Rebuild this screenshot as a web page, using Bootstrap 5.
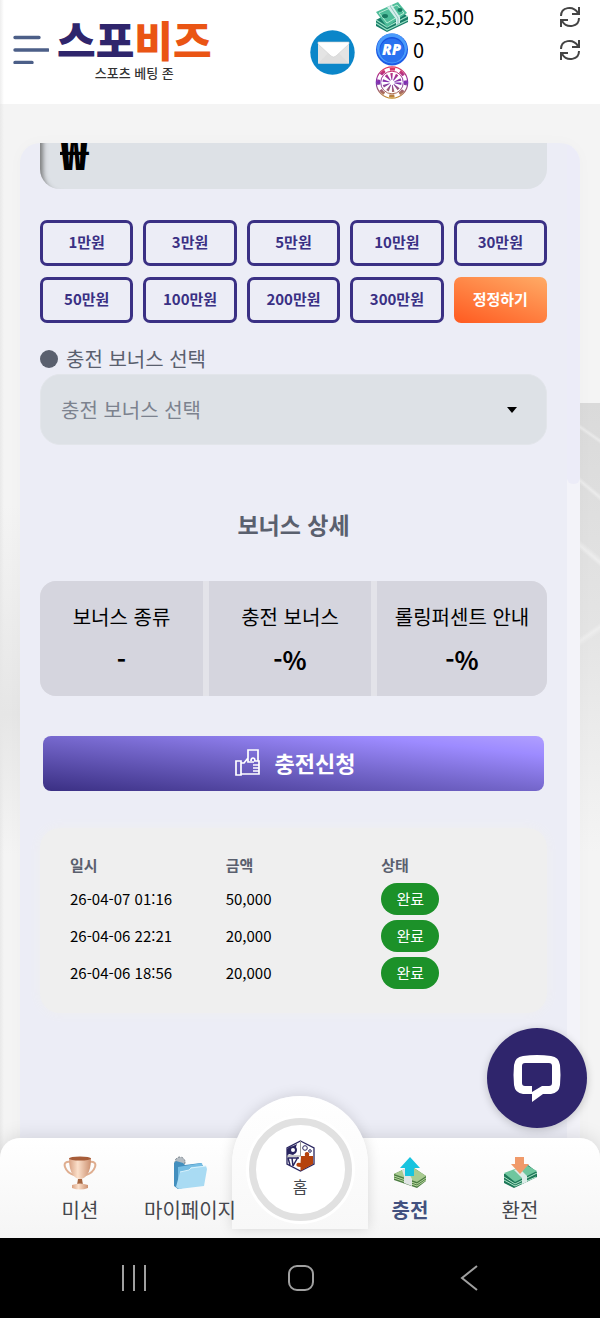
<!DOCTYPE html>
<html lang="ko">
<head>
<meta charset="utf-8">
<meta name="viewport" content="width=device-width, initial-scale=1">
<title>스포비즈 - 충전</title>
<link href="https://cdn.jsdelivr.net/npm/bootstrap@5.3.0/dist/css/bootstrap.min.css" rel="stylesheet">
<style>
:root { --navy: #2f256c; --violet: #3a3084; --ink: #5a606e; --panel: #ecedf6; --field: #dde1e6; }
body { font-family: "Noto Sans CJK KR", "Noto Sans", sans-serif; background: #f4f4f4; color: #000; font-size: 20px; line-height: 30px; }
button { font-family: inherit; }
.page { min-height: 100vh; }
.topbar { height: 104px; background: linear-gradient(90deg, #eee, #fff 4px); }
.burger { width: 37px; height: 32px; }
.brand { line-height: 42px; color: #333; padding-top: 18px; }
.brand-name { font-size: 42px; font-weight: 900; color: var(--navy); }
.brand-name b { font-weight: 900; color: #ea5514; }
.brand-sub { font-size: 13px; line-height: 20px; font-weight: 500; color: #333; margin-top: 3px; }
.stats { width: 206px; margin: 0 19px 0 20px; }
.stat-row { height: 33px; }
.stage { padding: 39px 20px 0; }
.scenery { background:
  linear-gradient(180deg, #f4f4f400, #e6e6e6 60%, #f4f4f400) left 400px / 20px 350px no-repeat,
  linear-gradient(35deg, #0000 44%, #fff6 50%, #0000 56%) right 310px / 20px 40px no-repeat,
  linear-gradient(220deg, #0000 44%, #fff6 50%, #0000 56%) right 360px / 20px 50px no-repeat,
  linear-gradient(220deg, #0000 42%, #fff6 50%, #0000 56%) right 420px / 20px 60px no-repeat,
  linear-gradient(325deg, #0000 42%, #fff5 50%, #0000 56%) right 500px / 20px 60px no-repeat,
  linear-gradient(180deg, #dadada, #e4e4e4 50%, #f4f4f400) right 299px / 20px 450px no-repeat,
  linear-gradient(90deg, #e9e9e9, #f4f4f4 4px); }
.panel { background: var(--panel); border-radius: 20px 20px 0 0; overflow: hidden; box-shadow: 0 0 16px #00000006; }
.panel-body { padding: 0 20px 124px; min-width: 0; }
.track { width: 13px; background: #f3f3f9; }
.thumb { height: 341px; background: #ececf8; border-radius: 0 0 6px 6px; }
.amount-clip { height: 46px; overflow: hidden; }
.amount { height: 80px; border: 0; border-radius: 20px; background: var(--field); padding: 2px 20px 0; font-size: 46px; font-weight: 900; color: #000; box-shadow: inset 5px 4px 5px -2px #555b; }
.amounts { display: grid; grid-template-columns: repeat(5, 1fr); gap: 11px 10px; margin-top: 31px; }
.amount-btn { height: 46px; padding: 0 0 2px; border: 3px solid var(--violet); border-radius: 7px; color: var(--violet); font-size: 15px; line-height: 20px; font-weight: 700; }
.amount-btn:hover { background: var(--violet); color: #fff; }
.reset-btn { border: 0; color: #fff; background: linear-gradient(20deg, #ff5a20, #ffab66); }
.reset-btn:hover { background: #ff5a20; }
.field-label { color: var(--ink); margin-top: 21px; }
.dot { width: 18px; height: 18px; background: var(--ink); }
.bonus-select { height: 71px; border: 1px solid #e2e5ea; border-radius: 20px; padding: 0 50px 0 20px; font-size: 20px; color: #7c828e; background-color: var(--field); background-size: 12px 6px; background-position: right 28px center;
  background-image: url("data:image/svg+xml,%3Csvg xmlns='http://www.w3.org/2000/svg' viewBox='0 0 12 6'%3E%3Cpath d='M1 0h10L6 6z'/%3E%3C/svg%3E"); }
.section-title { font-size: 23px; line-height: 30px; font-weight: 700; color: var(--ink); margin: 64px 0 42px; }
.bonus-grid { display: grid; grid-template-columns: 163fr 162fr 170fr; gap: 6px; background: #e3e3e9; border-radius: 16px; overflow: hidden; }
.bonus-cell { background: #d5d5de; height: 115px; padding-top: 21px; white-space: nowrap; }
.bonus-cell dt { font-weight: 400; }
.bonus-cell dd { font-size: 25px; line-height: 30px; font-weight: 700; margin: 12px 0 0; }
.submit-btn { height: 55px; margin: 40px 3px 0; padding: 0 0 2px 3px; gap: 14px; border: 0; border-radius: 8px; color: #fff; font-size: 22px; font-weight: 700; background: linear-gradient(6deg, #3a2f83, #7567cc 50%, #9d8bff 82%, #b09fff); }
.submit-btn:hover { color: #fff; background: #5547b0; }
.history { margin-top: 37px; padding: 22px 10px 22px 30px; border-radius: 20px; background: #efefef; box-shadow: 0 0 12px #efefef; font-size: 15px; line-height: 20px; }
.history table { table-layout: fixed; width: 100%; }
.history th { height: 30px; padding: 0; color: var(--ink); font-weight: 700; }
.history td { height: 37px; padding: 0; }
.done { display: block; width: 58px; line-height: 32px; border-radius: 16px; background: #1c9129; color: #fff; text-align: center; }
.dock { margin-top: -20px; height: 100px; padding: 0 25px; background: linear-gradient(#fff, #f5f5f5); border-radius: 20px 20px 0 0; box-shadow: 0 0 20px #0002; }
.tab { flex: 1 1 0; color: #45474d; text-decoration: none; white-space: nowrap; padding-top: 17px; }
.tab svg { width: 36px; height: 36px; }
.tab span { margin-top: 4px; }
.tab.active { color: #42517f; font-weight: 700; }
.plate { top: -42px; width: 136px; height: 133px; border-radius: 68px 68px 0 0; background: linear-gradient(#fff, #f8f8f8); box-shadow: 0 0 14px #0002; }
.home-tab { width: 103px; height: 103px; border: 7px solid #e1e1e1; background: #fff; box-shadow: 0 0 0 3px #fff; color: #45474d; font-size: 16px; line-height: 20px; text-decoration: none; margin-top: 14px; padding-bottom: 4px; }
.tab-label { position: relative; z-index: 2; }
.chat-btn { top: -110px; right: 13px; width: 100px; height: 100px; background: var(--navy); border: 0; box-shadow: 0 2px 8px #0003; z-index: 3; }
.sysbar { height: 80px; padding: 0 48px 4px 50px; background: #000; }
.sysbar button { flex: 1 1 0; background: none; border: 0; padding: 0; }
</style>
</head>
<body>
<div class="page d-flex flex-column">
  <header class="topbar d-flex flex-shrink-0">
    <button type="button" class="btn p-0 border-0 ms-2 ps-1 align-self-start mt-4" aria-label="메뉴">
      <svg class="burger mt-2" viewBox="0 0 37 32" fill="none" stroke="#4c5f88" stroke-width="3.4" stroke-linecap="round"><path d="M3 5.500h24M3 18h33M3 30.500h17"/></svg>
    </button>
    <a href="#" class="brand text-decoration-none text-center ms-2">
      <span class="brand-name d-block">스포<b>비즈</b></span>
      <span class="brand-sub d-block">스포츠 베팅 존</span>
    </a>
    <a href="#" class="ms-auto align-self-center" aria-label="쪽지">
      <svg class="d-block" width="45" height="45" viewBox="0 0 45 45"><circle cx="22.500" cy="22.500" r="22.200" fill="#0b86c9"/><path d="M8 12h31v21.500H8z" fill="#e4e4e4"/><path d="M8 33.500 20 21h7l12 12.500z" fill="#dedede"/><path d="M8 12h31v2L26 26q-2.500 2-5 0L8 14z" fill="#fff" stroke="#ccc" stroke-width=".6"/></svg>
    </a>
    <div class="stats">
      <div class="stat-row d-flex align-items-center">
        <svg width="34" height="33" viewBox="0 0 34 33"><path d="m1 20 22-12 10 9v5L12 32 1 26z" fill="#187c67"/><path d="m1 20 11 7 21-11M1 23l11 7 21-10" fill="none" stroke="#9be0c5" stroke-width="1.200"/><path d="M1 12 23 2l9 11-20 14z" fill="#4fbd9a"/><path d="m4 13 18-8 7 8-17 10z" fill="none" stroke="#b7ecd5"/><ellipse cx="10" cy="16" rx="3" ry="2" fill="#197a61"/><ellipse cx="25" cy="10" rx="2.500" ry="2" fill="#197a61"/><path d="m12 7 5-2 8 12v6l-4 2v-6z" fill="#d5efec"/><path d="m15 6 8 12v6" fill="none" stroke="#8fc4bd"/></svg>
        <span class="ms-1">52,500</span>
        <button type="button" class="btn p-0 border-0 ms-auto d-flex" aria-label="보유금 새로고침"><svg width="22" height="22" viewBox="0 0 22 22" fill="none" stroke="#444" stroke-width="2"><path d="M2 10C2 1 14-1 19 7M20 1v7h-7M20 12c0 9-12 11-17 3M2 21v-7h7"/></svg></button>
      </div>
      <div class="stat-row d-flex align-items-center">
        <svg width="34" height="33" viewBox="0 0 34 33"><circle cx="17" cy="16.500" r="16" fill="#1c5be5"/><circle cx="17" cy="15.500" r="15" fill="#4a9bfb"/><circle cx="17" cy="16.500" r="12.500" fill="#1755df"/><circle cx="17" cy="17.500" r="12" fill="#2a72f0"/><text x="16.500" y="22" text-anchor="middle" font-family="Open Sans, sans-serif" font-size="15" font-weight="800" font-style="italic" fill="#fff">RP</text></svg>
        <span class="ms-1">0</span>
        <button type="button" class="btn p-0 border-0 ms-auto d-flex" aria-label="포인트 새로고침"><svg width="22" height="22" viewBox="0 0 22 22" fill="none" stroke="#444" stroke-width="2"><path d="M2 10C2 1 14-1 19 7M20 1v7h-7M20 12c0 9-12 11-17 3M2 21v-7h7"/></svg></button>
      </div>
      <div class="stat-row d-flex align-items-center">
        <svg width="34" height="33" viewBox="0 0 34 33"><defs><linearGradient id="wheel" gradientUnits="userSpaceOnUse" x1="17" y1="0" x2="17" y2="33"><stop stop-color="#ed3552"/><stop offset=".5" stop-color="#7b2fb5"/><stop offset="1" stop-color="#c79322"/></linearGradient></defs><g fill="none" stroke="url(#wheel)"><circle cx="17" cy="16.500" r="15.700" stroke-width="1.200"/><circle cx="17" cy="16.500" r="13.500" stroke-width="3" stroke-dasharray="5.300 5.300" stroke-dashoffset="2.600"/><circle cx="17" cy="16.500" r="11.300"/><circle cx="17" cy="16.500" r="6" stroke-width="7" stroke-dasharray="1.700 2.070"/></g></svg>
        <span class="ms-1">0</span>
      </div>
    </div>
  </header>

  <main class="stage scenery flex-grow-1 d-flex">
    <div class="panel flex-grow-1 d-flex">
      <form class="panel-body flex-grow-1">
        <div class="amount-clip d-flex align-items-end">
          <input class="amount form-control" type="text" value="₩" aria-label="충전 금액">
        </div>
        <div class="amounts">
          <button type="button" class="btn amount-btn">1만원</button>
          <button type="button" class="btn amount-btn">3만원</button>
          <button type="button" class="btn amount-btn">5만원</button>
          <button type="button" class="btn amount-btn">10만원</button>
          <button type="button" class="btn amount-btn">30만원</button>
          <button type="button" class="btn amount-btn">50만원</button>
          <button type="button" class="btn amount-btn">100만원</button>
          <button type="button" class="btn amount-btn">200만원</button>
          <button type="button" class="btn amount-btn">300만원</button>
          <button type="reset" class="btn amount-btn reset-btn">정정하기</button>
        </div>
        <label class="field-label d-flex align-items-center" for="bonus"><i class="dot rounded-circle me-2"></i>충전 보너스 선택</label>
        <select class="form-select bonus-select" id="bonus"><option>충전 보너스 선택</option></select>

        <h2 class="section-title text-center">보너스 상세</h2>
        <div class="bonus-grid text-center">
          <dl class="bonus-cell mb-0"><dt>보너스 종류</dt><dd>-</dd></dl>
          <dl class="bonus-cell mb-0"><dt>충전 보너스</dt><dd>-%</dd></dl>
          <dl class="bonus-cell mb-0"><dt>롤링퍼센트 안내</dt><dd>-%</dd></dl>
        </div>
        <div class="d-flex">
          <button type="submit" class="btn submit-btn flex-grow-1 d-flex align-items-center justify-content-center">
            <svg width="26" height="27" viewBox="0 0 26 27" fill="none" stroke="#fff" stroke-width="1.700"><path d="M1 12h5v14H1zM6 14h3l4-5v-8h10v11M6 25h18V12h-5M13 9v4h6M16 12q0-3 2-3t2 3M18 16h6M18 19h6M18 22h6"/></svg>
            충전신청
          </button>
        </div>
        <div class="history">
          <table>
            <thead><tr><th scope="col">일시</th><th scope="col">금액</th><th scope="col">상태</th></tr></thead>
            <tbody>
              <tr><td>26-04-07 01:16</td><td>50,000</td><td><span class="done">완료</span></td></tr>
              <tr><td>26-04-06 22:21</td><td>20,000</td><td><span class="done">완료</span></td></tr>
              <tr><td>26-04-06 18:56</td><td>20,000</td><td><span class="done">완료</span></td></tr>
            </tbody>
          </table>
        </div>
      </form>
      <div class="track flex-shrink-0"><div class="thumb"></div></div>
    </div>
  </main>

  <nav class="dock position-relative d-flex flex-shrink-0">
    <a href="#" class="tab d-flex flex-column align-items-center">
      <svg viewBox="0 0 36 36"><defs><linearGradient id="cup"><stop stop-color="#d9a182"/><stop offset=".4" stop-color="#fbe0cb"/><stop offset="1" stop-color="#cc9070"/></linearGradient></defs><path d="M9 7Q1 6 3 12q2 6 9 8M27 7q8-1 6 5-2 6-9 8" fill="none" stroke="#dfae90" stroke-width="2"/><path d="M7 3h22q0 12-4 17-3 4-7 4t-7-4Q7 15 7 3z" fill="url(#cup)"/><ellipse cx="18" cy="3.500" rx="11" ry="2" fill="#a65c38"/><path d="M16 24h4l1 6h-6z" fill="#a5643f"/><path d="M10 30q8-3 16 0v3q-8 3-16 0z" fill="url(#cup)"/></svg>
      <span class="tab-label">미션</span>
    </a>
    <a href="#" class="tab d-flex flex-column align-items-center">
      <svg viewBox="0 0 36 36"><circle cx="8" cy="7" r="5" fill="#b5bcc2" stroke="#77838c" stroke-dasharray="2 1.500"/><path d="m2 8 2-2 7 2 2 2 16-2 2 3-1 18-24 5-4-3z" fill="#438fbe"/><path d="m6 12 24-4 1 6-3 16-22 3z" fill="#76bde3"/><path d="m8 17 9-2 2-3 15-1 1 3-3 17-25 3-3-2z" fill="#a9dbf3"/><path d="m8 17 9-2 2-2 15-2" fill="none" stroke="#d8f2fc"/></svg>
      <span class="tab-label">마이페이지</span>
    </a>
    <div class="tab"></div>
    <a href="#" class="tab active d-flex flex-column align-items-center" aria-current="page">
      <svg viewBox="0 0 36 36"><path d="m2 19 17-8 15 10v5l-9 7L2 25z" fill="#4b7c42"/><path d="m2 19 17-8 15 10-9 6z" fill="#a9cb91"/><path d="m2 21 23 8 9-6M2 23l23 8 9-6" fill="none" stroke="#b9d79e"/><path d="m10 15 4-2 6 11v7l-8-3v-7z" fill="#e1e5e5"/><path d="M18 2 8 13h5v8h9v-8h6z" fill="#18c4df"/></svg>
      <span class="tab-label">충전</span>
    </a>
    <a href="#" class="tab d-flex flex-column align-items-center">
      <svg viewBox="0 0 36 36"><path d="m2 19 24-9 9 7v5L12 33 2 28z" fill="#1d7858"/><path d="m2 18 22-8 11 6-22 11z" fill="#6fc69e"/><path d="m2 22 11 7 22-11M2 25l11 6 21-9" fill="none" stroke="#b0e5c9"/><path d="m12 15 5-2 8 8v6l-5 2v-6z" fill="#dcece8"/><path d="M13 2h9v7h5l-9 10L9 9h4z" fill="#f09a6a"/></svg>
      <span class="tab-label">환전</span>
    </a>
    <div class="plate position-absolute start-50 translate-middle-x d-flex justify-content-center align-items-center">
      <a href="#" class="home-tab rounded-circle d-flex flex-column align-items-center justify-content-center flex-shrink-0">
        <svg width="29" height="32" viewBox="0 0 29 32"><path d="M14.500 1 28 8v16l-13.500 7L1 24V8z" fill="#fff" stroke="#29255f" stroke-width="1.300"/><path d="M1 9q3-3 6-3l4-2-1 3q2 3 0 6l-3 2-4-1-2 2z" fill="#29255f"/><circle cx="7" cy="10" r="2" fill="#fff"/><path d="m2 18 2 7M6 18l1 8M12 17l-5 9M2 18h11" stroke="#29255f" stroke-width="1.500" fill="none"/><path d="M14.500 1v15M1 16h14" stroke="#999"/><circle cx="19" cy="8" r="2.300" fill="none" stroke="#29255f"/><circle cx="24" cy="11" r="1.300" fill="none" stroke="#29255f"/><path d="M15 16h4q-1-4 2-4t2 4h4v8l-12.500 7v-4q-5 0-4-3 1-2 4-1z" fill="#b5420c"/></svg>
        <span class="mt-1">홈</span>
      </a>
    </div>
    <button type="button" class="chat-btn position-absolute rounded-circle p-0 d-flex align-items-center justify-content-center" aria-label="채팅 상담">
      <svg width="48" height="48" viewBox="0 0 48 48"><path fill="#fff" fill-rule="evenodd" d="M10 2Q24 0 38 2q8 1 9 9 1 10 0 20-1 8-9 9h-8l-11 8v-8h-9q-8-1-9-9-1-10 0-20 1-8 9-9zm2 7q-3 0-3 3v17q0 3 3 3h7v6l10-6h7q3 0 3-3V12q0-3-3-3z"/></svg>
    </button>
  </nav>

  <div class="sysbar d-flex flex-shrink-0">
    <button type="button" aria-label="최근 앱"><svg width="26" height="26" viewBox="0 0 26 26" stroke="#a0a0a0" stroke-width="2"><path d="M2 0v26M13 0v26M24 0v26"/></svg></button>
    <button type="button" aria-label="홈 화면"><svg width="28" height="28" viewBox="0 0 28 28" fill="none" stroke="#a0a0a0" stroke-width="2"><rect x="2" y="2" width="24" height="24" rx="8"/></svg></button>
    <button type="button" aria-label="뒤로"><svg width="28" height="28" viewBox="0 0 28 28" fill="none" stroke="#a0a0a0" stroke-width="2"><path d="M23 2 8 14l15 12"/></svg></button>
  </div>
</div>
<script src="https://cdn.jsdelivr.net/npm/bootstrap@5.3.0/dist/js/bootstrap.bundle.min.js"></script>
</body>
</html>
